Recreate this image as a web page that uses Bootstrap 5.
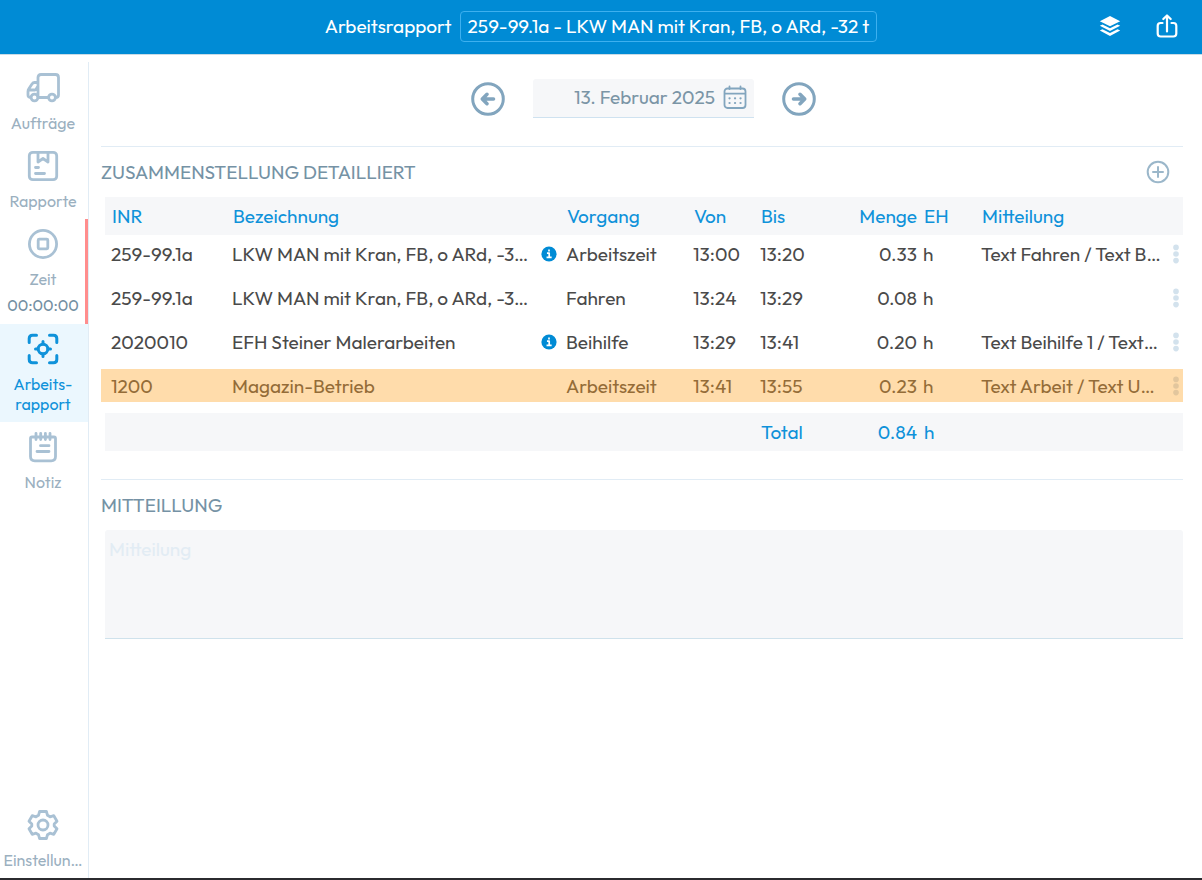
<!DOCTYPE html>
<html lang="de">
<head>
<meta charset="utf-8">
<meta name="viewport" content="width=device-width, initial-scale=1">
<title>Arbeitsrapport</title>
<link href="https://cdn.jsdelivr.net/npm/bootstrap@5.3.0/dist/css/bootstrap.min.css" rel="stylesheet">
<style>
  body { font-family: Outfit, Lato, "Liberation Sans", sans-serif; font-size: 19px; line-height: 24px; color: #4a4a4a; background: #fff; }
  svg { display: block; fill: none; stroke: currentColor; stroke-linecap: round; stroke-linejoin: round; }
  .app { border-bottom: 2px solid #2b2b2f; }
  .plain { border: 0; background: none; padding: 0; color: inherit; }
  .topbar { background: #008bd5; color: #fff; height: 54px; padding-bottom: 2px; box-shadow: 0 1px 0 #c9dbe6; }
  .order-btn { background: none; border: 1px solid #3db0ef; border-radius: 4px; height: 31px; padding: 0 7px; color: #fff; }
  .top-actions { right: 22px; top: 0; gap: 31px; padding-bottom: 2px; }
  .side { width: 89px; margin-top: 8px; padding-top: 1px; border-right: 1px solid #e1ecf5; font-size: 16px; line-height: 20px; }
  .side a { display: flex; flex-direction: column; align-items: center; padding: 9px 2px 8px 0; color: #9bb0bf; text-decoration: none; text-align: center; white-space: nowrap; }
  .side svg { margin-bottom: 9px; color: #a9c1d4; }
  .side a.running { border-right: 3px solid #ff8d8d; padding-left: 1px; padding-right: 0; }
  .side .clock { color: #7490a3; line-height: 27px; height: 27px; padding-top: 3px; }
  .side a.current, .side a.current svg { color: #0f92da; }
  .side a.current { background: #ebf7fe; }
  .pane { padding: 0 19px 0 12px; }
  .datebar { height: 92px; gap: 27px; color: #82a5be; padding: 0 0 3px 3px; }
  .datebox { width: 221px; height: 39px; background: #f6f7f9; border-bottom: 1px solid #cfe2f0; border-radius: 3px 3px 0 0; padding: 0 7px 2px; gap: 8px; }
  .datebox input { border: 0; background: none; padding: 0; min-width: 0; flex: 1; text-align: right; color: #7b95a6; outline: 0; }
  .block { border-top: 1px solid #e1ecf5; }
  .block h2 { font-size: 19px; line-height: 24px; font-weight: 400; color: #7592a5; margin: 0; }
  .block-head { height: 50px; }
  .block-head .plain { margin-right: 13px; color: #9bb7ca; }
  .report { width: 100%; table-layout: fixed; border-collapse: separate; border-spacing: 0; margin-bottom: 28px; white-space: nowrap; }
  .report th, .report td { padding: 0 0 0 10px; font-weight: 400; background-clip: padding-box; }
  .report thead th, .report tfoot td { background-color: #f6f7f9; color: #0f92da; padding-left: 11px; }
  .report thead th { height: 40px; border-bottom: 2px solid transparent; }
  .report tbody td { height: 44px; border-bottom: 11px solid transparent; }
  .report tfoot td { height: 38px; }
  .report thead th:first-child, .report tfoot td:first-child { border-left: 4px solid transparent; padding-left: 7px; }
  .report .qty { text-align: right; padding-left: 0; }
  .report .unit { padding-left: 6px; }
  .report thead .unit, .report tfoot .unit { padding-left: 7px; }
  .report .marked td { background-color: #ffdcab; color: #946c38; }
  .report td.more { padding-left: 7px; color: #d3e2ed; }
  .report .marked td.more { color: #e2c69d; }
  .more .plain { display: block; }
  .w-inr { width: 121px; } .w-info { width: 25px; } .w-job { width: 127px; } .w-from { width: 67px; } .w-to { width: 75px; }
  .w-qty { width: 92px; } .w-unit { width: 54px; } .w-note { width: 195px; } .w-more { width: 17px; }
  .note-wrap { padding-left: 4px; }
  .note { display: block; width: 100%; height: 109px; border: 0; border-bottom: 1px solid #cfe2ec; border-radius: 3px 3px 0 0; background: #f6f7f9; padding: 7px 4px; resize: none; outline: 0; }
  .note::placeholder { color: #e2ecf4; opacity: 1; }
</style>
</head>
<body>
<svg width="0" height="0" class="position-absolute" aria-hidden="true">
  <symbol id="info" viewBox="0 0 16 16"><circle cx="8" cy="8" r="7.6" fill="#008bd5" stroke="none"/><path d="M8 4.3v.4M6.8 7.2H8.2V11M6.4 11.3h3.4" stroke="#fff" stroke-width="1.7" stroke-linecap="square"/></symbol>
  <symbol id="dots" viewBox="0 0 6 20"><g fill="currentColor" stroke="none"><circle cx="3" cy="3.4" r="2.8"/><circle cx="3" cy="10" r="2.8"/><circle cx="3" cy="16.6" r="2.8"/></g></symbol>
</svg>
<div class="app d-flex flex-column min-vh-100">
  <header class="topbar position-relative d-flex align-items-center justify-content-center gap-2">
    <span>Arbeitsrapport</span>
    <button type="button" class="order-btn">259-99.1a - LKW MAN mit Kran, FB, o ARd, -32 t</button>
    <div class="top-actions position-absolute h-100 d-flex align-items-center">
      <button type="button" class="plain" aria-label="Ebenen"><svg width="26" height="26" viewBox="0 0 26 26"><g fill="#fff" stroke="none"><path d="M13 3 23.2 8.2 13 13.2 2.8 8.2z"/><path d="M2.800 12.800 5.500 11.500 13 15.200 20.500 11.500 23.200 12.800 13 18z"/><path d="M2.800 17.600 5.500 16.300 13 20 20.500 16.300 23.200 17.600 13 23z"/></g></svg></button>
      <button type="button" class="plain" aria-label="Teilen"><svg width="26" height="26" viewBox="0 0 26 26" stroke-width="2.200"><path d="M8.500 10H6.500Q3.700 10 3.700 12.800V20.500Q3.700 23.500 6.700 23.500H19.300Q22.300 23.500 22.300 20.500V12.800Q22.300 10 19.500 10H17.500M13 18.500V3M9.300 6 13 2.500 16.700 6"/></svg></button>
    </div>
  </header>
  <div class="d-flex flex-grow-1">
    <nav class="side flex-shrink-0 d-flex flex-column">
      <a href="#"><svg width="34" height="32" viewBox="0 0 34 32" stroke-width="2.800"><path d="M12.500 25.500H22M12 25V5.500Q12 2.500 15 2.500H29.500Q32.500 2.500 32.500 5.500V23Q32.500 25.500 29.500 25.500M12 10.500H8.500Q7 10.500 6 12L3 16.500Q2 18 2 19.500V23Q2 25 4 25.500M2.500 18H9Q10 18 10.500 16.500L12 14"/><circle cx="8.500" cy="25.500" r="3.400"/><circle cx="26" cy="25.500" r="3.400"/></svg>Aufträge</a>
      <a href="#"><svg width="32" height="32" viewBox="0 0 32 32" stroke-width="2.800"><rect x="2.300" y="2.300" width="27.400" height="27.400" rx="3.500"/><path d="M11 3V12L16 8.500 21 12V3M8.500 17.500H11.500M8.500 23.500H17.500"/></svg>Rapporte</a>
      <a href="#" class="running"><svg width="32" height="32" viewBox="0 0 32 32" stroke-width="2.800"><circle cx="16" cy="16" r="13.600"/><rect x="11.200" y="11.200" width="9.600" height="9.600" rx="1"/></svg>Zeit<span class="clock">00:00:00</span></a>
      <a href="#" class="current"><svg width="32" height="32" viewBox="0 0 32 32" stroke-width="3"><path d="M2.200 9.500V5.500Q2.200 2.200 5.500 2.200H9.500M22.500 2.200H26.500Q29.800 2.200 29.800 5.500V9.500M29.800 22.500V26.500Q29.800 29.800 26.500 29.800H22.500M9.500 29.800H5.500Q2.200 29.800 2.200 26.500V22.500M16 8.500V11M16 21V23.500M8.500 16H11M21 16H23.500"/><circle cx="16" cy="16" r="4.800"/></svg>Arbeits-<br>rapport</a>
      <a href="#"><svg width="32" height="32" viewBox="0 0 32 32" stroke-width="2.800"><path d="M5 6H27Q28.500 6 28.500 7.500V25.500Q28.500 29.800 24.200 29.800H7.800Q3.500 29.800 3.500 25.500V7.500Q3.500 6 5 6M9 2.300V8.500M13.700 2.300V8.500M18.400 2.300V8.500M23 2.300V8.500M13.500 14.700H22M10 20.500H22"/></svg>Notiz</a>
      <a href="#" class="mt-auto"><svg width="32" height="32" viewBox="0 0 32 32" stroke-width="2.800"><path d="M12.600 2.500H19.400L20.500 6.300 23 7.800 26.800 6.700 30 12.200 27.200 15V17L30 19.800 26.800 25.300 23 24.200 20.500 25.700 19.400 29.500H12.600L11.500 25.700 9 24.200 5.200 25.300 2 19.800 4.800 17V15L2 12.200 5.200 6.700 9 7.800 11.500 6.300z"/><circle cx="16" cy="16" r="5"/></svg>Einstellun…</a>
    </nav>
    <main class="pane flex-grow-1">
      <div class="datebar d-flex align-items-center justify-content-center">
        <button type="button" class="plain" aria-label="Vorheriger Tag"><svg width="36" height="36" viewBox="0 0 36 36" stroke-width="3"><circle cx="18" cy="18" r="15.300"/><path d="M23.500 18H13M17 13.300 12.300 18 17 22.700" stroke-width="3.600"/></svg></button>
        <div class="datebox d-flex align-items-center">
          <input type="text" value="13. Februar 2025" aria-label="Datum">
          <svg width="24" height="24" viewBox="0 0 24 24" stroke-width="1.800"><rect x="1.500" y="3.500" width="21" height="19.500" rx="3"/><path d="M2 8.700H22M6.500 1.500V4M17.500 1.500V4"/><path d="M6.500 13.300h.1M12 13.300h.1M17.500 13.300h.1M6.500 18h.1M12 18h.1M17.500 18h.1" stroke-width="2.200"/></svg>
        </div>
        <button type="button" class="plain" aria-label="Nächster Tag"><svg width="36" height="36" viewBox="0 0 36 36" stroke-width="3"><circle cx="18" cy="18" r="15.300"/><path d="M12.500 18H23M19 13.300 23.700 18 19 22.700" stroke-width="3.600"/></svg></button>
      </div>
      <section class="block">
        <div class="block-head d-flex align-items-center justify-content-between">
          <h2>ZUSAMMENSTELLUNG DETAILLIERT</h2>
          <button type="button" class="plain" aria-label="Hinzufügen"><svg width="24" height="24" viewBox="0 0 24 24" stroke-width="2"><circle cx="12" cy="12" r="10.300"/><path d="M12 7V17M7 12H17"/></svg></button>
        </div>
        <table class="report">
          <colgroup><col class="w-inr"><col><col class="w-info"><col class="w-job"><col class="w-from"><col class="w-to"><col class="w-qty"><col class="w-unit"><col class="w-note"><col class="w-more"></colgroup>
          <thead><tr><th>INR</th><th>Bezeichnung</th><th></th><th>Vorgang</th><th>Von</th><th>Bis</th><th class="qty">Menge</th><th class="unit">EH</th><th>Mitteilung</th><th></th></tr></thead>
          <tbody>
            <tr><td>259-99.1a</td><td>LKW MAN mit Kran, FB, o ARd, -3…</td><td><svg width="16" height="16"><use href="#info"/></svg></td><td>Arbeitszeit</td><td>13:00</td><td>13:20</td><td class="qty">0.33</td><td class="unit">h</td><td>Text Fahren / Text B…</td><td class="more"><button type="button" class="plain" aria-label="Mehr"><svg width="6" height="20"><use href="#dots"/></svg></button></td></tr>
            <tr><td>259-99.1a</td><td>LKW MAN mit Kran, FB, o ARd, -3…</td><td></td><td>Fahren</td><td>13:24</td><td>13:29</td><td class="qty">0.08</td><td class="unit">h</td><td></td><td class="more"><button type="button" class="plain" aria-label="Mehr"><svg width="6" height="20"><use href="#dots"/></svg></button></td></tr>
            <tr><td>2020010</td><td>EFH Steiner Malerarbeiten</td><td><svg width="16" height="16"><use href="#info"/></svg></td><td>Beihilfe</td><td>13:29</td><td>13:41</td><td class="qty">0.20</td><td class="unit">h</td><td>Text Beihilfe 1 / Text…</td><td class="more"><button type="button" class="plain" aria-label="Mehr"><svg width="6" height="20"><use href="#dots"/></svg></button></td></tr>
            <tr class="marked"><td>1200</td><td>Magazin-Betrieb</td><td></td><td>Arbeitszeit</td><td>13:41</td><td>13:55</td><td class="qty">0.23</td><td class="unit">h</td><td>Text Arbeit / Text U…</td><td class="more"><button type="button" class="plain" aria-label="Mehr"><svg width="6" height="20"><use href="#dots"/></svg></button></td></tr>
          </tbody>
          <tfoot><tr><td></td><td></td><td></td><td></td><td></td><td>Total</td><td class="qty">0.84</td><td class="unit">h</td><td></td><td></td></tr></tfoot>
        </table>
      </section>
      <section class="block">
        <div class="block-head d-flex align-items-center"><h2><label for="note">MITTEILLUNG</label></h2></div>
        <div class="note-wrap"><textarea id="note" class="note" placeholder="Mitteilung"></textarea></div>
      </section>
    </main>
  </div>
</div>
<script src="https://cdn.jsdelivr.net/npm/bootstrap@5.3.0/dist/js/bootstrap.bundle.min.js"></script>
</body>
</html>
